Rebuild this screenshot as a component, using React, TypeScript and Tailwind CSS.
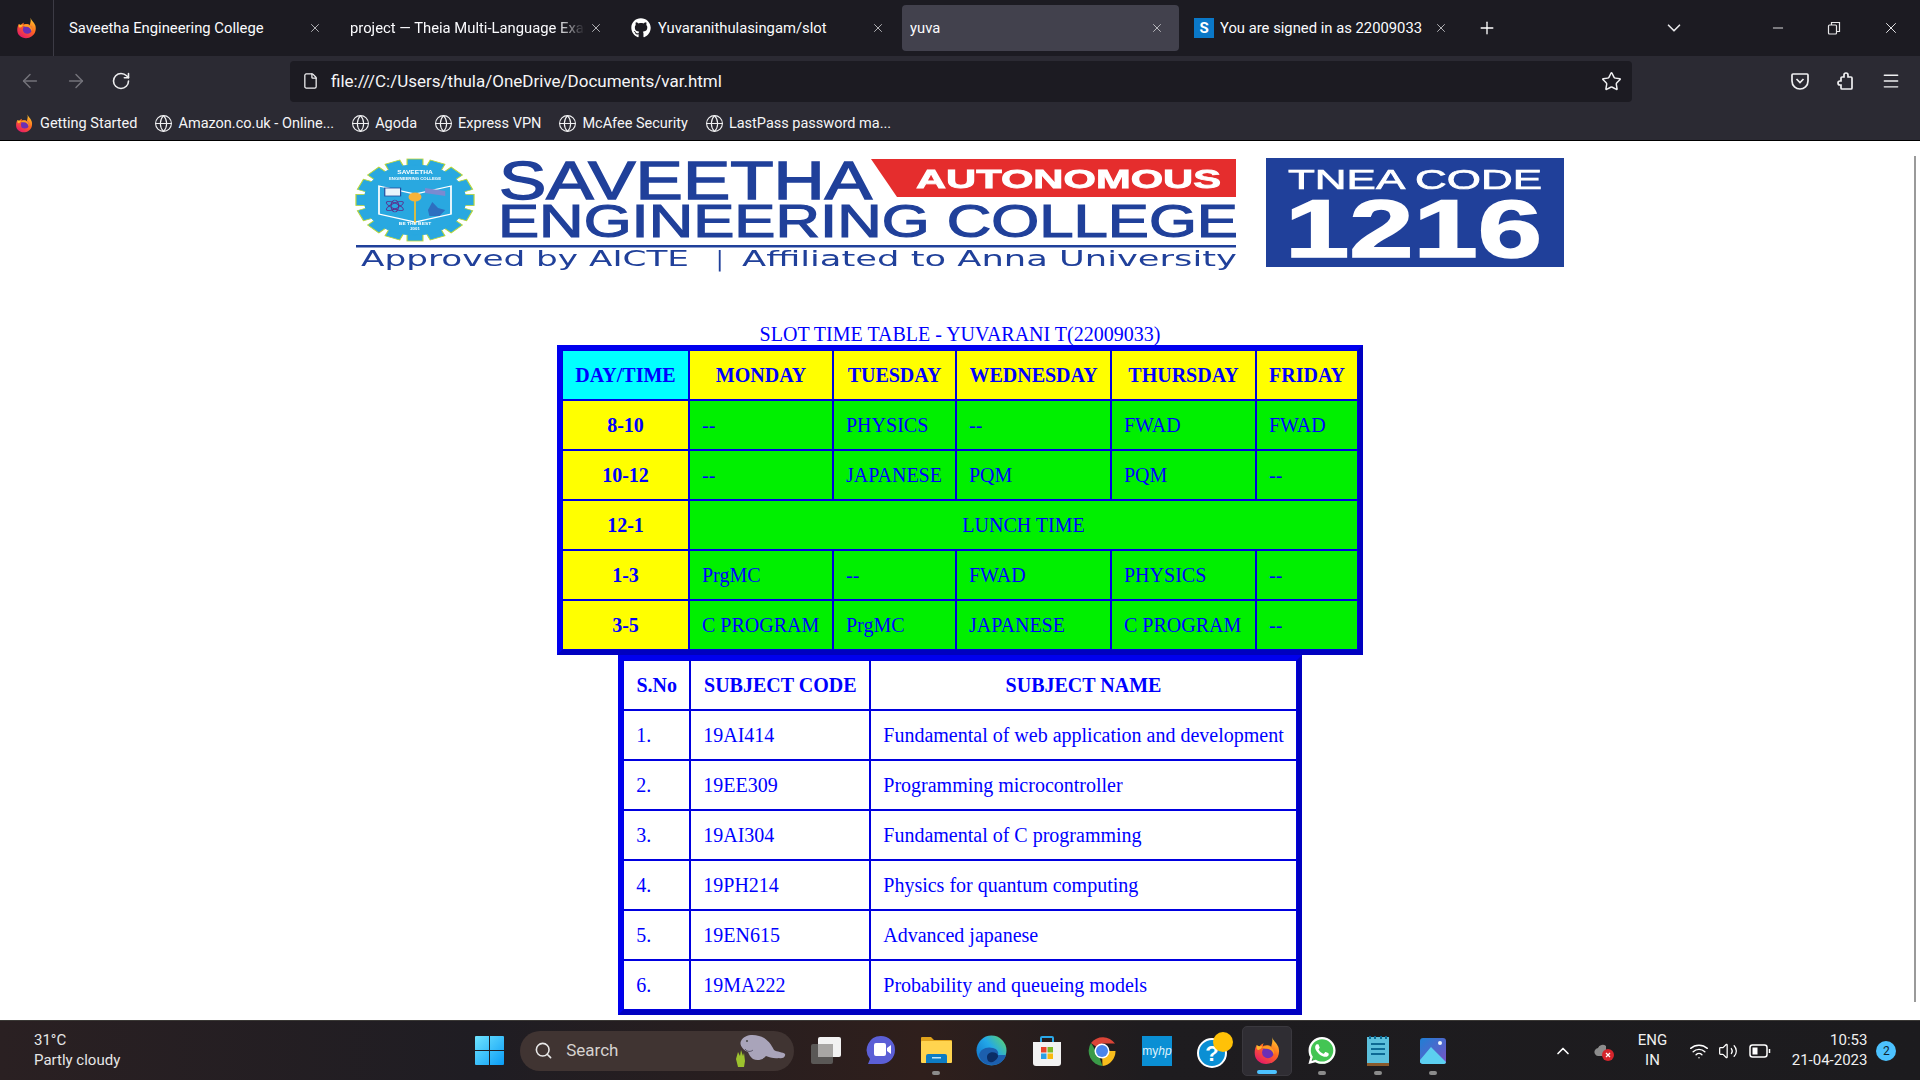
import {
  ArrowLeft,
  ArrowRight,
  ChevronDown,
  ChevronUp,
  File,
  Globe,
  Menu,
  Minus,
  Plus,
  RotateCw,
  Search,
  Star,
  Volume2,
  Wifi,
  X,
} from 'lucide-react';
import { FaGithub, FaWhatsapp } from 'react-icons/fa';

const tabs = [
  { title: 'Saveetha Engineering College', box: 'w-[281px] pr-[20px]', fade: false },
  { title: 'project — Theia Multi-Language Example', box: 'w-[281px] pr-[20px]', fade: true },
  { title: 'Yuvaranithulasingam/slot', box: 'w-[279px] pr-[17px]', icon: 'github', fade: false },
  { title: 'yuva', box: 'w-[277px] pr-[15px] mr-[7px] bg-[#42414d]', fade: false },
  { title: 'You are signed in as 22009033', box: 'w-[277px] pr-[15px]', icon: 'sway', fade: false },
];

const bookmarks = ['Amazon.co.uk - Online...', 'Agoda', 'Express VPN', 'McAfee Security', 'LastPass password ma...'];

const slots = [
  { time: '8-10', cells: ['--', 'PHYSICS', '--', 'FWAD', 'FWAD'] },
  { time: '10-12', cells: ['--', 'JAPANESE', 'PQM', 'PQM', '--'] },
  { time: '12-1', cells: [] },
  { time: '1-3', cells: ['PrgMC', '--', 'FWAD', 'PHYSICS', '--'] },
  { time: '3-5', cells: ['C PROGRAM', 'PrgMC', 'JAPANESE', 'C PROGRAM', '--'] },
];

const days = [
  { name: 'MONDAY', width: 'w-[144px]' },
  { name: 'TUESDAY', width: 'w-[123px]' },
  { name: 'WEDNESDAY', width: 'w-[155px]' },
  { name: 'THURSDAY', width: 'w-[145px]' },
  { name: 'FRIDAY', width: 'w-[102px]' },
];

const subjects = [
  ['1.', '19AI414', 'Fundamental of web application and development'],
  ['2.', '19EE309', 'Programming microcontroller'],
  ['3.', '19AI304', 'Fundamental of C programming'],
  ['4.', '19PH214', 'Physics for quantum computing'],
  ['5.', '19EN615', 'Advanced japanese'],
  ['6.', '19MA222', 'Probability and queueing models'],
];

function FirefoxIcon({ size, id }: { size: number; id: string }) {
  return (
    <svg width={size} height={size} viewBox="0 0 32 32" className="shrink-0">
      <defs>
        <linearGradient id={`${id}-a`} x1="0.8" y1="0" x2="0.2" y2="1">
          <stop offset="0" stopColor="#ffd02e" />
          <stop offset="0.45" stopColor="#ff6a1f" />
          <stop offset="1" stopColor="#e3136e" />
        </linearGradient>
      </defs>
      <path d="M21 1c1 4 5 6 7 11 2 6 0 13-5 16-5 4-13 4-18-1C1 23 1 15 4 10c0 2 1 3 2 4 1-3 3-5 6-6-1 1-1 2-1 3 3-1 7-1 9 1 1-4 2-7 1-11z" fill={`url(#${id}-a)`} />
      <circle cx="16.5" cy="18" r="6.5" fill="#6b2fb5" />
      <path d="M10 13c3-3 8-3 11 0 2 2 3 5 2 8-1-4-4-7-8-7-2 0-4 0-5-1z" fill="#ff9a1f" />
      <path d="M4 10c2 1 4 2 6 1 0 2-1 3-3 4-1 1-2 0-3-1z" fill="#ffb52e" />
    </svg>
  );
}

function Tab({ tab }: { tab: (typeof tabs)[number] }) {
  return (
    <div className={`${tab.box} h-[46px] flex items-center pl-[8px] rounded-[4px] shrink-0`}>
      {tab.icon === 'github' && <FaGithub className="w-[20px] h-[20px] text-white mr-[7px] shrink-0" />}
      {tab.icon === 'sway' && (
        <span className="w-[20px] h-[20px] bg-[#0a78c8] text-white text-[15px] font-bold flex items-center justify-center mr-[6px] shrink-0">
          S
        </span>
      )}
      <span
        className={`flex-1 whitespace-nowrap overflow-hidden text-[14.8px] text-[#fbfbfe] ${
          tab.fade ? '[mask-image:linear-gradient(to_right,black_88%,transparent)]' : ''
        }`}
      >
        {tab.title}
      </span>
      <X className="w-[14px] h-[14px] text-[#d0d0d4] ml-[4px] shrink-0" strokeWidth={1.4} />
    </div>
  );
}

function BrowserChrome() {
  return (
    <div className="h-[141px] shrink-0 bg-[#2b2a33] border-b border-black">
      <div className="h-[56px] bg-[#1c1b22] flex items-center">
        <div className="w-[54px] h-full border-r border-[#3c3b45] flex items-center justify-center mr-[7px]">
          <FirefoxIcon size={22} id="ffa" />
        </div>
        {tabs.map((tab) => (
          <Tab key={tab.title} tab={tab} />
        ))}
        <Plus className="w-[20px] h-[20px] text-white ml-[14px] shrink-0" strokeWidth={1.6} />
        <ChevronDown className="w-[22px] h-[22px] text-[#e8e8ea] ml-[166px] shrink-0" strokeWidth={1.8} />
        <Minus className="w-[16px] h-[16px] text-[#e8e8ea] ml-[85px] shrink-0" strokeWidth={1.4} />
        <svg width="14" height="14" viewBox="0 0 14 14" className="ml-[41px] shrink-0" fill="none" stroke="#e8e8ea" strokeWidth="1.2">
          <rect x="1.5" y="4" width="8" height="9" rx="1" />
          <path d="M4.5 4V1.5h8v9H9.5" />
        </svg>
        <X className="w-[18px] h-[18px] text-[#e8e8ea] ml-[41px] shrink-0" strokeWidth={1.3} />
      </div>

      <div className="h-[50px] flex items-center">
        <ArrowLeft className="w-[22px] h-[22px] text-[#74737b] ml-[19px]" strokeWidth={1.6} />
        <ArrowRight className="w-[22px] h-[22px] text-[#74737b] ml-[24px]" strokeWidth={1.6} />
        <RotateCw className="w-[20px] h-[20px] text-[#eeeef0] ml-[24px]" strokeWidth={1.9} />
        <div className="w-[1342px] h-[41px] ml-[159px] bg-[#1c1b22] rounded-[4px] flex items-center pl-[12px] pr-[10px]">
          <File className="w-[17px] h-[18px] text-[#f0f0f2]" strokeWidth={1.8} />
          <span className="ml-[12px] pt-[2px] flex-1 text-[17px] text-[#f5f5f7] whitespace-nowrap">
            file:///C:/Users/thula/OneDrive/Documents/var.html
          </span>
          <Star className="w-[21px] h-[21px] text-[#f0f0f2]" strokeWidth={1.7} />
        </div>
        <svg width="20" height="20" viewBox="0 0 20 20" className="ml-[158px]" fill="none" stroke="#f0f0f2" strokeWidth="1.7">
          <path d="M3 3h14a1 1 0 0 1 1 1v6c0 5-4 8-8 8s-8-3-8-8V4a1 1 0 0 1 1-1z" />
          <path d="M6.5 8l3.5 3.5L13.5 8" />
        </svg>
        <svg width="20" height="20" viewBox="0 0 20 20" className="ml-[25px]" fill="none" stroke="#f0f0f2" strokeWidth="1.7">
          <path d="M9 6V4a2 2 0 0 1 4 0v2h3a1 1 0 0 1 1 1v10a1 1 0 0 1-1 1H7a1 1 0 0 1-1-1v-3H5a2 2 0 0 1 0-4h1V7a1 1 0 0 1 1-1z" />
        </svg>
        <Menu className="w-[20px] h-[20px] text-[#f0f0f2] ml-[26px]" strokeWidth={1.7} />
      </div>

      <div className="h-[34px] pt-[1px] flex items-center pl-[15px] text-[14.5px] text-[#f5f5f7] whitespace-nowrap">
        <FirefoxIcon size={19} id="ffb" />
        <span className="ml-[6px]">Getting Started</span>
        {bookmarks.map((name) => (
          <span key={name} className="flex items-center ml-[17px]">
            <Globe className="w-[19px] h-[19px] text-[#f0f0f2]" strokeWidth={1.4} />
            <span className="ml-[5px]">{name}</span>
          </span>
        ))}
      </div>
    </div>
  );
}

function Seal() {
  const teeth = Array.from({ length: 16 }, (_, i) => i * 22.5);
  return (
    <g transform="translate(415 200) scale(1.44 1)">
      {teeth.map((a) => (
        <rect key={a} x="-5.5" y="-41" width="11" height="12" fill="#29a8e0" stroke="#b9d63a" strokeWidth="0.8" transform={`rotate(${a})`} />
      ))}
      <circle r="35" fill="#29a8e0" stroke="#29a8e0" strokeWidth="1" />
      <text y="-26" textAnchor="middle" fontFamily="Liberation Sans" fontWeight="700" fontSize="4.6" fill="#fff">SAVEETHA</text>
      <text y="-20" textAnchor="middle" fontFamily="Liberation Sans" fontWeight="700" fontSize="3" fill="#fff">ENGINEERING COLLEGE</text>
      <path d="M-25 -14L0 -6 25 -14V14L0 22-25 14z" fill="#29a8e0" stroke="#fff" strokeWidth="1.2" />
      <path d="M0 -6V24" stroke="#f0c030" strokeWidth="1.2" />
      <circle cy="-3" r="4.5" fill="#f6b33a" />
      <rect x="-21" y="-12" width="11" height="8" fill="#e8f4fb" stroke="#214a9c" strokeWidth="0.8" />
      <path d="M7 -12l14 3v5l-14-3z" fill="#7b8ad0" />
      <g fill="none" stroke="#5b2f8d" strokeWidth="0.7">
        <ellipse cx="-14" cy="6" rx="7" ry="2.6" transform="rotate(35 -14 6)" />
        <ellipse cx="-14" cy="6" rx="7" ry="2.6" transform="rotate(-35 -14 6)" />
        <ellipse cx="-14" cy="6" rx="2.6" ry="6" />
      </g>
      <path d="M9 10l3-8 4 6 5 2-4 6h-7z" fill="#2d6fc0" />
      <text y="25" textAnchor="middle" fontFamily="Liberation Sans" fontWeight="700" fontSize="3.4" fill="#fff">BE THE BEST</text>
      <text y="30" textAnchor="middle" fontFamily="Liberation Sans" fontWeight="700" fontSize="3" fill="#fff">2001</text>
    </g>
  );
}

function CollegeBanner() {
  return (
    <svg viewBox="350 155 1220 120" className="w-[1220px] h-[120px] blur-[0.4px]">
      <Seal />
      <text x="499" y="199" textLength="373" lengthAdjust="spacingAndGlyphs" fontFamily="Liberation Sans" fontSize="54" stroke="#20409a" strokeWidth="1.4" fill="#20409a">SAVEETHA</text>
      <polygon points="871,159 1236,159 1236,197 897,197" fill="#e52d2d" />
      <text x="916" y="188" textLength="305" lengthAdjust="spacingAndGlyphs" fontFamily="Liberation Sans" fontWeight="700" fontSize="26" stroke="#fff" strokeWidth="0.8" fill="#fff">AUTONOMOUS</text>
      <text x="498" y="237" textLength="740" lengthAdjust="spacingAndGlyphs" fontFamily="Liberation Sans" fontSize="46" stroke="#20409a" strokeWidth="1.2" fill="#20409a">ENGINEERING COLLEGE</text>
      <rect x="356" y="245" width="880" height="2.5" fill="#20409a" />
      <text x="361" y="266" textLength="328" lengthAdjust="spacingAndGlyphs" fontFamily="DejaVu Sans" fontSize="22" fill="#20409a">Approved by AICTE</text>
      <text x="716" y="266" fontFamily="DejaVu Sans" fontSize="22" fill="#20409a">|</text>
      <text x="742" y="266" textLength="495" lengthAdjust="spacingAndGlyphs" fontFamily="DejaVu Sans" fontSize="22" fill="#20409a">Affiliated to Anna University</text>
      <rect x="1266" y="158" width="298" height="109" fill="#20409a" />
      <text x="1288" y="189" textLength="254" lengthAdjust="spacingAndGlyphs" fontFamily="Liberation Sans" fontSize="28" stroke="#fff" strokeWidth="0.7" fill="#fff">TNEA CODE</text>
      <text x="1285" y="257" textLength="257" lengthAdjust="spacingAndGlyphs" fontFamily="Liberation Sans" fontWeight="700" fontSize="82" stroke="#fff" strokeWidth="1.5" fill="#fff">1216</text>
    </svg>
  );
}

const tableClass =
  'border-separate border-spacing-0 border-[5px] border-t-[#0000ee] border-l-[#0000ee] border-r-[#0000c0] border-b-[#0000c0] mx-auto';
const cellClass = 'border border-[#0000e0] px-3 py-3 leading-[24px] whitespace-nowrap';

function SlotTable() {
  return (
    <table className={tableClass}>
      <caption className="pt-[2px] text-[20px] leading-[21px] text-[#0000ff]">SLOT TIME TABLE - YUVARANI T(22009033)</caption>
      <thead>
        <tr>
          <th className={`${cellClass} w-[127px] bg-[#00ffff]`}>DAY/TIME</th>
          {days.map((day) => (
            <th key={day.name} className={`${cellClass} ${day.width} bg-[#ffff00]`}>
              {day.name}
            </th>
          ))}
        </tr>
      </thead>
      <tbody>
        {slots.map((row) => (
          <tr key={row.time}>
            <th className={`${cellClass} bg-[#ffff00]`}>{row.time}</th>
            {row.cells.length === 0 ? (
              <td colSpan={5} className={`${cellClass} bg-[#00f000] text-center`}>
                LUNCH TIME
              </td>
            ) : (
              row.cells.map((cell, idx) => (
                <td key={idx} className={`${cellClass} bg-[#00f000]`}>
                  {cell}
                </td>
              ))
            )}
          </tr>
        ))}
      </tbody>
    </table>
  );
}

function SubjectTable() {
  return (
    <table className={tableClass}>
      <thead>
        <tr>
          <th className={`${cellClass} w-[67px]`}>S.No</th>
          <th className={`${cellClass} w-[180px]`}>SUBJECT CODE</th>
          <th className={`${cellClass} w-[425px]`}>SUBJECT NAME</th>
        </tr>
      </thead>
      <tbody>
        {subjects.map((row) => (
          <tr key={row[0]}>
            {row.map((cell) => (
              <td key={cell} className={cellClass}>
                {cell}
              </td>
            ))}
          </tr>
        ))}
      </tbody>
    </table>
  );
}

function WindowsLogo() {
  return (
    <svg width="29" height="29" viewBox="0 0 29 29">
      <defs>
        <linearGradient id="win" x1="0" y1="0" x2="1" y2="1">
          <stop offset="0" stopColor="#6fe4ff" />
          <stop offset="1" stopColor="#0a9cf5" />
        </linearGradient>
      </defs>
      <path d="M0 1a1 1 0 0 1 1-1h13v14H0zM15 0h13a1 1 0 0 1 1 1v13H15zM0 15h14v14H1a1 1 0 0 1-1-1zM15 15h14v13a1 1 0 0 1-1 1H15z" fill="url(#win)" />
    </svg>
  );
}

function Manatee() {
  return (
    <svg width="52" height="34" viewBox="0 0 52 34">
      <path d="M2 25l2-7 2 4 1-6 2 6 1-3 1 8-1 6H4z" fill="#9cc22e" />
      <path d="M7 7C10 1 18 0 25 2c8 2 12 8 15 14 3 2 9 2 11 4 1 3-3 5-6 4-5 1-10-1-13-2-3 4-9 5-13 3-3-2-4-5-5-7C9 16 5 11 7 7z" fill="#a9a4ba" />
      <circle cx="13" cy="7" r="1" fill="#444" />
      <path d="M11 15c2 3 6 3 8 1" stroke="#5a5568" strokeWidth="1" fill="none" />
    </svg>
  );
}

function TaskbarItem({ children, dot, active }: { children: React.ReactNode; dot?: boolean; active?: boolean }) {
  return (
    <div
      className={`w-[50px] h-[50px] mx-[2.6px] shrink-0 rounded-[5px] flex items-center justify-center relative ${
        active ? 'bg-[#2f2d33] border border-[#3a383e]' : ''
      }`}
    >
      {children}
      {dot && <span className="absolute bottom-[1px] w-[8px] h-[4px] rounded-full bg-[#8b8b8b]" />}
      {active && <span className="absolute bottom-[1px] w-[20px] h-[4px] rounded-full bg-[#4cc2ff]" />}
    </div>
  );
}

function Taskbar() {
  return (
    <div className="h-[60px] shrink-0 flex items-center border-t border-[#3a3835] bg-[linear-gradient(90deg,#2a2022_0%,#1f1d23_25%,#2f1f1c_48%,#1e1c1f_60%,#1c1b1e_100%)] text-white whitespace-nowrap">
      <div className="w-[462px] pl-[34px] -mt-[2px] text-[15px] leading-[20px] text-[#e6e6e6] shrink-0">
        <div>31°C</div>
        <div>Partly cloudy</div>
      </div>
      <TaskbarItem>
        <WindowsLogo />
      </TaskbarItem>
      <div className="w-[274px] h-[40px] ml-[3px] mr-[4px] rounded-full bg-[#403432] flex items-center pl-[14px] pr-[8px] shrink-0">
        <Search className="w-[19px] h-[19px] text-[#e8e8e8]" strokeWidth={2} />
        <span className="ml-[13px] flex-1 text-[17px] text-[#d6d2d0]">Search</span>
        <Manatee />
      </div>
      <TaskbarItem>
        <svg width="30" height="30" viewBox="0 0 30 30">
          <rect x="0" y="8" width="22" height="20" rx="2" fill="#5a5856" />
          <rect x="7" y="1" width="23" height="20" rx="2" fill="#f2f2f2" />
          <rect x="7" y="8" width="15" height="13" fill="#a8a6a4" />
        </svg>
      </TaskbarItem>
      <TaskbarItem>
        <svg width="30" height="32" viewBox="0 0 30 32">
          <path d="M15 1a14 14 0 0 1 0 28H2l2-5A14 14 0 0 1 15 1z" fill="#5b5fd6" />
          <path d="M8 10a2 2 0 0 1 2-2h8a2 2 0 0 1 2 2v9a2 2 0 0 1-2 2h-8a2 2 0 0 1-2-2zM21 13l4-3v9l-4-3z" fill="#fff" />
        </svg>
      </TaskbarItem>
      <TaskbarItem dot>
        <svg width="31" height="30" viewBox="0 0 31 30">
          <path d="M0 2a1 1 0 0 1 1-1h9l3 3h17a1 1 0 0 1 1 1v5H0z" fill="#e0a31c" />
          <rect y="5" width="31" height="22" rx="1" fill="#ffd44f" />
          <path d="M5 27v-7a2 2 0 0 1 2-2h17a2 2 0 0 1 2 2v7z" fill="#0d7cc4" />
          <rect x="11" y="21" width="9" height="1.5" fill="#bfe3f7" />
        </svg>
      </TaskbarItem>
      <TaskbarItem>
        <svg width="31" height="31" viewBox="0 0 31 31">
          <defs>
            <linearGradient id="edge" x1="0" y1="0.9" x2="1" y2="0.1">
              <stop offset="0" stopColor="#0f6fc8" />
              <stop offset="0.55" stopColor="#23a8e8" />
              <stop offset="1" stopColor="#5dd46c" />
            </linearGradient>
          </defs>
          <circle cx="15.5" cy="15.5" r="15" fill="url(#edge)" />
          <path d="M3 20c1-6 8-9 14-7 4 1 6 4 5 7h8c-1 5-7 10-13 10C9 30 4 26 3 20z" fill="#1c5fae" />
          <path d="M11 22c0-4 5-6 9-4 2 1 2 3 2 4-2 4-6 6-8 5-2 0-3-3-3-5z" fill="#0b2e66" />
        </svg>
      </TaskbarItem>
      <TaskbarItem>
        <svg width="30" height="32" viewBox="0 0 30 32">
          <path d="M9 8V3a1 1 0 0 1 1-1h10a1 1 0 0 1 1 1v5" fill="none" stroke="#2aa8e8" strokeWidth="2" />
          <path d="M1 7h28v21a3 3 0 0 1-3 3H4a3 3 0 0 1-3-3z" fill="#f2f2f2" />
          <rect x="9" y="12" width="5.5" height="5.5" fill="#e8452c" />
          <rect x="15.5" y="12" width="5.5" height="5.5" fill="#7fba2a" />
          <rect x="9" y="18.5" width="5.5" height="5.5" fill="#2aa0e8" />
          <rect x="15.5" y="18.5" width="5.5" height="5.5" fill="#f8b90f" />
        </svg>
      </TaskbarItem>
      <TaskbarItem>
        <svg width="30" height="30" viewBox="0 0 30 30">
          <path d="M15 15L4 7A15 15 0 0 1 28 7.5H15z" fill="#db4437" />
          <path d="M15 15h13.5a15 15 0 0 1-13 15z" fill="#f8bd1c" />
          <path d="M15.5 30A15 15 0 0 1 4 7l8 13z" fill="#3a9b48" />
          <circle cx="15" cy="15" r="7.5" fill="#fff" />
          <circle cx="15" cy="15" r="6" fill="#4a85ec" />
        </svg>
      </TaskbarItem>
      <TaskbarItem>
        <div className="w-[30px] h-[30px] bg-[#0a8fd4] flex items-center justify-center text-[12px] text-[#dff2fb] font-['Liberation_Sans']">
          my<span className="italic">hp</span>
        </div>
      </TaskbarItem>
      <TaskbarItem>
        <svg width="42" height="38" viewBox="-6 0 42 38" className="overflow-visible">
          <circle cx="15" cy="21" r="14" fill="#0a8fd4" stroke="#fff" strokeWidth="2" />
          <text x="15" y="29" textAnchor="middle" fontFamily="Liberation Sans" fontWeight="700" fontSize="22" fill="#fff">?</text>
          <circle cx="26" cy="10" r="10" fill="#ffc107" />
        </svg>
      </TaskbarItem>
      <TaskbarItem active>
        <FirefoxIcon size={29} id="ffc" />
      </TaskbarItem>
      <TaskbarItem dot>
        <span className="relative w-[30px] h-[30px] flex items-center justify-center">
          <span className="absolute w-[26px] h-[26px] rounded-full bg-[#43c553]" />
          <FaWhatsapp className="relative w-[31px] h-[31px] text-white" />
        </span>
      </TaskbarItem>
      <TaskbarItem dot>
        <svg width="22" height="30" viewBox="0 0 22 30">
          <rect y="1" width="22" height="29" fill="#8a5a2c" />
          <rect y="1" width="22" height="26" fill="#5cc0dc" />
          <path d="M4 8h14M4 13h14M4 18h14" stroke="#0d6a94" strokeWidth="2" />
          <path d="M3 0v3M8 0v3M14 0v3M19 0v3" stroke="#0d6a94" strokeWidth="2" />
        </svg>
      </TaskbarItem>
      <TaskbarItem dot>
        <svg width="26" height="26" viewBox="0 0 26 26">
          <defs>
            <linearGradient id="photos" x1="0" y1="0" x2="1" y2="1">
              <stop offset="0" stopColor="#1f7fd4" />
              <stop offset="1" stopColor="#7a52c4" />
            </linearGradient>
          </defs>
          <rect width="26" height="26" rx="3" fill="url(#photos)" />
          <path d="M0 22l11-13 15 15a2 2 0 0 1-2 2H3a3 3 0 0 1-3-4z" fill="#5ccff0" />
          <circle cx="20" cy="5" r="2" fill="#eef6fb" />
        </svg>
      </TaskbarItem>

      <ChevronUp className="w-[20px] h-[20px] text-white ml-[93px] shrink-0" strokeWidth={2} />
      <svg width="22" height="22" viewBox="0 0 22 22" className="ml-[20px] shrink-0">
        <path d="M2 14a4 4 0 0 1 3-6 5 5 0 0 1 8-2v10H5a4 4 0 0 1-3-2z" fill="#8c8c8c" />
        <circle cx="15" cy="15" r="6" fill="#d5252c" />
        <path d="M13 13l4 4M17 13l-4 4" stroke="#fff" strokeWidth="1.2" />
      </svg>
      <div className="w-[40px] ml-[17px] -mt-[2px] text-center text-[15px] leading-[20px] text-[#f0f0f0] shrink-0">
        <div>ENG</div>
        <div>IN</div>
      </div>
      <Wifi className="w-[20px] h-[20px] ml-[17px] shrink-0" strokeWidth={1.7} />
      <Volume2 className="w-[20px] h-[20px] ml-[9px] shrink-0" strokeWidth={1.5} />
      <svg width="22" height="14" viewBox="0 0 22 14" className="ml-[11px] shrink-0" fill="none" stroke="#fff" strokeWidth="1.5">
        <rect x="1" y="1" width="17" height="12" rx="2.5" />
        <rect x="3.5" y="3.5" width="5" height="7" fill="#fff" stroke="none" />
        <path d="M20.5 5v4" />
      </svg>
      <div className="w-[90px] ml-[6px] -mt-[2px] text-right text-[15px] leading-[20px] text-[#f0f0f0] shrink-0">
        <div>10:53</div>
        <div>21-04-2023</div>
      </div>
      <span className="w-[20px] h-[20px] rounded-full bg-[#4cc2ff] text-[#10242e] text-[12px] flex items-center justify-center ml-[9px] shrink-0">
        2
      </span>
    </div>
  );
}

export default function App() {
  return (
    <div className="w-[1920px] h-[1080px] flex flex-col overflow-hidden bg-white font-['Roboto',sans-serif]">
      <BrowserChrome />
      <main className="relative flex-1 overflow-hidden pt-[14px] font-['Liberation_Serif',serif] text-[20px] leading-[23px] text-[#0000ff]">
        <div className="flex justify-center">
          <CollegeBanner />
        </div>
        <div className="mt-[47px]">
          <SlotTable />
          <SubjectTable />
        </div>
        <div className="absolute right-[4px] top-[15px] w-[2px] h-[846px] bg-[#9a9a9a]" />
      </main>
      <Taskbar />
    </div>
  );
}
